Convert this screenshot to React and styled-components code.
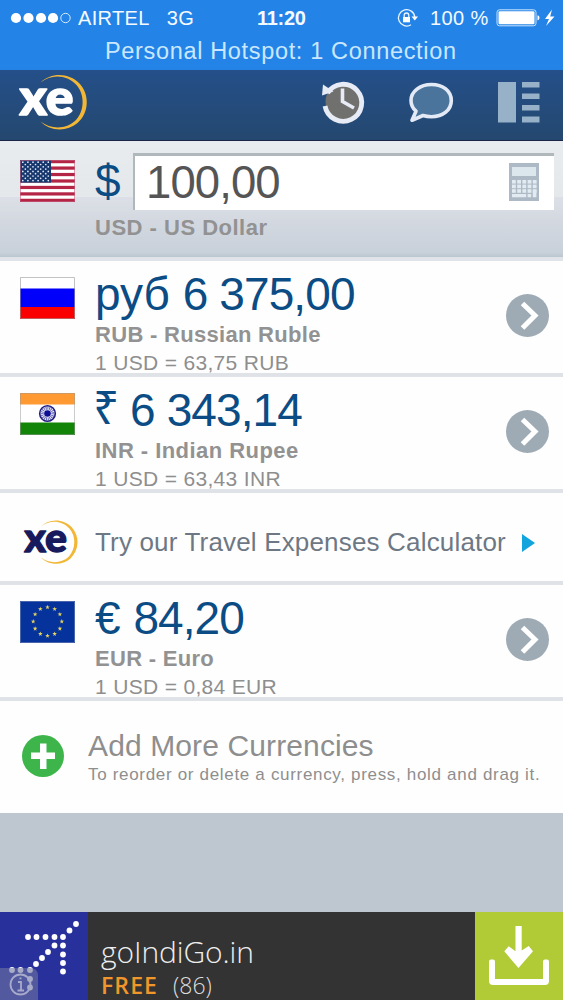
import styled, { createGlobalStyle } from "styled-components"

const GlobalStyle = createGlobalStyle`
    * {
        box-sizing: border-box;
    }
    body {
        margin: 0;
        background: #bec7d0;
        font-family: "Liberation Sans", Arial, sans-serif;
    }
    svg {
        display: block;
        flex: none;
        overflow: visible;
    }
`
const Screen = styled.div`
    width: 563px;
    height: 1000px;
    display: flex;
    flex-direction: column;
    overflow: hidden;
    background: #bec7d0;
    white-space: nowrap;
`

// status bar
const Status = styled.header`
    height: 70px;
    flex: none;
    background: #2483e7;
    color: #f4faff;
`
const StatusLine = styled.div`
    height: 36px;
    display: grid;
    grid-template-columns: 257px 140px 1fr;
    align-items: center;
    font-size: 20px;
    line-height: 24px;
`
const StatusGroup = styled.div`
    display: flex;
    align-items: center;
`
const Carrier = styled.span`
    margin-left: 7px;
    letter-spacing: 0.35px;
`
const Network = styled.span`
    margin-left: 17px;
    letter-spacing: 0.3px;
`
const Time = styled.span`
    font-size: 20px;
    font-weight: bold;
    letter-spacing: -0.3px;
`
const Percent = styled.span`
    margin: 0 7px 0 11px;
    letter-spacing: 0.4px;
`
const Hotspot = styled.div`
    padding: 1px 0 0 105px;
    font-size: 23.5px;
    line-height: 29px;
    letter-spacing: 0.66px;
    color: #c9e8ff;
`

// top bar
const Nav = styled.nav`
    height: 71px;
    flex: none;
    display: flex;
    align-items: flex-start;
    justify-content: space-between;
    padding: 3px 23px 0 17px;
    border-bottom: 1px solid #1b2547;
    background: linear-gradient(#244f89, #24486f);
`
const NavIcons = styled.div`
    display: flex;
    padding-top: 7px;
    gap: 43.5px;
`

// currencies
const Base = styled.section`
    height: 120px;
    flex: none;
    display: grid;
    grid-template-columns: 75px 38px 1fr;
    grid-template-rows: 57px 1fr;
    padding: 12px 9px 0 20px;
    border-bottom: 4px solid #e0e3e7;
    background: linear-gradient(#e9ecef 0, #e5e8eb 56px, #dcdfe6 56px, #c8d0d9 112px, #bac6d0 116px);
`
const FlagSlot = styled.div`
    padding-top: ${(p) => p.$top || 0}px;
`
const Symbol = styled.span`
    font-size: 46px;
    line-height: 57px;
    color: #0b4c85;
`
const AmountField = styled.div`
    display: flex;
    align-items: center;
    justify-content: space-between;
    padding: 0 15px 0 11px;
    border-top: 3px solid #b0b8bb;
    border-left: 2px solid #b0b8bb;
    background: #fff;
    font-size: 45.5px;
    line-height: 50px;
    letter-spacing: -0.9px;
    color: #555;
`
const Keypad = styled.div`
    padding-bottom: 2px;
`
const BaseName = styled.div`
    grid-column: 2 / 4;
    padding-top: 5px;
`
const Row = styled.section`
    height: ${(p) => p.$height || 116}px;
    flex: none;
    display: flex;
    align-items: ${(p) => (p.$center ? "center" : "flex-start")};
    padding: ${(p) => p.$pad || "0 14px 0 20px"};
    border-bottom: ${(p) => (p.$last ? 0 : 4)}px solid #dfe2e6;
    background: #fefefe;
`
const Details = styled.div`
    flex: 1;
    padding: 6px 0 0 20px;
`
const Amount = styled.div`
    display: flex;
    height: 55px;
    font-size: 46px;
    line-height: 54px;
    color: #0b4c85;
    white-space: pre;
`
const Digits = styled.span`
    margin-left: ${(p) => p.$gap}px;
    letter-spacing: -0.9px;
`
const Rupee = styled.span`
    width: 24px;
    margin-left: -2px;
    font-family: "Noto Sans", sans-serif;
    font-size: 46px;
    line-height: 47px;
`
const Name = styled.div`
    font-size: 22px;
    font-weight: bold;
    line-height: 25px;
    letter-spacing: ${(p) => p.$spacing || 0}px;
    color: #929292;
`
const Rate = styled.div`
    font-size: 21px;
    line-height: 24px;
    padding-top: 4px;
    letter-spacing: 0.33px;
    color: #8e8e8e;
`
const Arrow = styled.div`
    padding-top: 33px;
`
const Promo = styled.div`
    margin-left: 15px;
    flex: 1;
    padding-top: 1px;
    font-size: 26px;
    letter-spacing: 0.17px;
    color: #6d7884;
`
const AddText = styled.div`
    margin: 2px 0 0 23px;
`
const AddTitle = styled.div`
    font-size: 30px;
    line-height: 34px;
    letter-spacing: 0.12px;
    color: #8e8e8e;
`
const AddHint = styled.div`
    font-size: 17px;
    line-height: 22px;
    padding-top: 1px;
    letter-spacing: 0.68px;
    color: #8e8e8e;
`

// ad banner
const Banner = styled.footer`
    height: 88px;
    flex: none;
    margin-top: auto;
    display: flex;
    background: #333;
`
const BannerText = styled.div`
    flex: 1;
    padding: 20px 0 0 13px;
    font-family: "Open Sans", sans-serif;
    font-weight: 300;
    color: #eee;
`
const BannerTitle = styled.div`
    font-size: 30px;
    line-height: 40px;
    letter-spacing: -0.1px;
`
const BannerLine = styled.div`
    display: flex;
    gap: 15px;
    font-size: 23px;
    line-height: 26px;
    color: #ddd;
`
const Free = styled.span`
    font-weight: 600;
    letter-spacing: 1.1px;
    color: #f0962a;
`

const Signal = () => (
    <svg width="71" height="20" viewBox="0 0 71 20">
        {[16, 28.5, 41, 53].map((x) => (
            <circle key={x} cx={x} cy="10" r="5.1" fill="#fff" />
        ))}
        <circle cx="65.5" cy="10" r="4.7" fill="none" stroke="#d5ebff" strokeWidth="1" />
    </svg>
)

const RotationLock = () => (
    <svg width="22" height="20" viewBox="0 0 22 20" fill="none" stroke="#eaf5ff">
        <path d="M14 16.8A8.2 8.2 0 1 1 17.8 9" strokeWidth="1.3" />
        <path d="M14.5 8.6h6.5l-3.2 4z" fill="#fff" stroke="none" />
        <rect x="6" y="9" width="7" height="5.3" fill="#fff" stroke="none" />
        <path d="M7.2 9V7.3a2.3 2.3 0 0 1 4.6 0V9" strokeWidth="1.3" />
    </svg>
)

const Battery = () => (
    <svg width="60" height="20" viewBox="0 0 60 20">
        <rect x="1" y="1.8" width="39" height="16" rx="2.5" fill="none" stroke="#c5e3ff" />
        <rect x="2.5" y="3.3" width="36" height="13" rx="1.2" fill="#fff" />
        <path d="M41.5 7.2q2 .4 2 2.6t-2 2.6z" fill="#fff" />
        <path d="M56 1.5 49 11h4l-3 7 8.5-9.5h-4.3z" fill="#fff" />
    </svg>
)

const XeLogo = ({ width, height, color }) => (
    <svg width={width} height={height} viewBox="0 0 70 58">
        <path
            d="M23.5 9.5C34 -1 52 -.6 62.5 10.5C73 22 72 40 60.5 50C50 59 33 58.5 23.5 48.5C34 56.5 49 56.5 58.5 47.5C67.5 38.5 68.2 22 59.5 12C49.5 1 34 1 23.5 9.5Z"
            fill="#f2b736"
        />
        <text
            x="2.5"
            y="42"
            fontFamily="Lato, sans-serif"
            fontSize="50"
            fontWeight="900"
            fill={color}
            stroke={color}
            strokeWidth="1.6"
            strokeLinejoin="round"
            textLength="54"
            lengthAdjust="spacingAndGlyphs"
        >
            xe
        </text>
    </svg>
)

const HistoryIcon = () => (
    <svg width="44" height="44" viewBox="0 0 44 44" fill="none" stroke="#e7ebf5">
        <circle cx="22.5" cy="21.5" r="18" fill="#70706e" stroke="none" />
        <path d="M6.5 13A18.5 18.5 0 1 1 4 26" strokeWidth="4.8" />
        <path d="M2 4.5 1 15.5 12.5 11.5z" fill="#e7ebf5" stroke="none" />
        <path d="M21.5 8.5v13l11.5 6.5" strokeWidth="3.6" />
    </svg>
)

const ChatIcon = () => (
    <svg width="46" height="44" viewBox="0 0 46 44">
        <path
            d="M22.5 4.5C11 4.5 2 11.5 2 20.5c0 4.5 2 8 5 10.7L3 40.3 14 35.5c2.5.8 5.500 1.200 8.500 1.200C34 36.700 42.300 30 42.300 20.500S34 4.500 22.500 4.500Z"
            fill="#4a749c"
            stroke="#e3eaf6"
            strokeWidth="3.6"
            strokeLinejoin="round"
        />
    </svg>
)

const ListIcon = () => (
    <svg width="42" height="44" viewBox="0 0 42 44" fill="#96b1c8">
        <path d="M0 2h18v40.5H0zM24 2h17.5v5.5H24zM24 13.5h17.5v5.5H24zM24 25h17.5v5.5H24zM24 36.5h17.5v6H24z" />
    </svg>
)

const CalculatorIcon = () => (
    <svg width="30" height="38" viewBox="0 0 30 38">
        <path d="M0 0h30v38H0z" fill="#adbac6" />
        <path d="M3 4h24v9H3z" fill="#dce6ed" />
        {[0, 1, 2].map((r) =>
            [3, 8.2, 13.4, 18.6, 23.8].map((x) => (
                <rect key={`${r}-${x}`} x={x} y={17 + r * 4.6} width="3.8" height="3.6" fill="#e2ebf1" />
            ))
        )}
        <path d="M3 31h14.2v3.2H3zM18.6 31h3.6v3.2h-3.6zM23.8 27h3.6v7.2h-3.6z" fill="#e2ebf1" />
    </svg>
)

const UsFlag = () => (
    <svg width="55" height="42" viewBox="0 0 55 42">
        <path d="M0 0h55v42H0z" fill="#fff" />
        {[0, 1, 2, 3, 4, 5, 6].map((i) => (
            <rect key={i} y={i * 6.46} width="55" height="3.23" fill="#b32445" />
        ))}
        <path d="M0 0h31v22.6H0z" fill="#17376f" />
        {[0, 1, 2, 3, 4, 5, 6, 7, 8].map((r) =>
            [0, 1, 2, 3, 4, 5].slice(r % 2).map((c) => (
                <circle key={`${r}-${c}`} cx={2.8 + c * 5.1 - (r % 2) * 2.55} cy={2.2 + r * 2.3} r=".85" fill="#e6ecf7" />
            ))
        )}
        <path d="M.5.5h54v41H.5z" fill="none" stroke="#c56380" strokeOpacity=".6" />
    </svg>
)

const RuFlag = () => (
    <svg width="55" height="42" viewBox="0 0 55 42">
        <path d="M0 0h55v42H0z" fill="#fff" />
        <path d="M0 11.5h55v19H0z" fill="#0000fb" />
        <path d="M0 30h55v12H0z" fill="#fb0000" />
        <path d="M.5.5h54v41H.5z" fill="none" stroke="#999" strokeOpacity=".6" />
    </svg>
)

const InFlag = () => (
    <svg width="55" height="42" viewBox="0 0 55 42">
        <path d="M0 0h55v42H0z" fill="#fff" />
        <path d="M0 0h55v11.5H0z" fill="#ff9a33" />
        <path d="M0 29.5h55V42H0z" fill="#128509" />
        <circle cx="27.5" cy="20.5" r="7.8" fill="#f1f1fc" stroke="#1c1c80" strokeWidth="1.6" />
        <circle cx="27.5" cy="20.5" r="5.5" fill="none" stroke="#5c5cae" strokeWidth="3.5" strokeDasharray=".9 .9" />
        <circle cx="27.5" cy="20.5" r="3.3" fill="#0d0d95" />
        <path d="M.5.5h54v41H.5z" fill="none" stroke="#999" strokeOpacity=".5" />
    </svg>
)

const EuFlag = () => (
    <svg width="55" height="42" viewBox="0 0 55 42">
        <path d="M0 0h55v42H0z" fill="#06339b" />
        {[...Array(12)].map((_, i) => {
            const a = (i * Math.PI) / 6
            return (
                <path
                    key={i}
                    transform={`translate(${27.5 + 14.3 * Math.sin(a)} ${20.5 - 14.3 * Math.cos(a)})`}
                    d="M0-2.4.6-.8h1.7L.9.3l.5 1.7L0 1l-1.4 1 .5-1.7-1.4-1.1h1.7z"
                    fill="#e6d45e"
                />
            )
        })}
        <path d="M.5.5h54v41H.5z" fill="none" stroke="#7587b8" strokeOpacity=".6" />
    </svg>
)

const ArrowIcon = () => (
    <svg width="43" height="43" viewBox="0 0 43 43">
        <circle cx="21.5" cy="21.5" r="21.5" fill="#9eabb5" />
        <path d="m16.5 9.5 12.5 12-12.5 12.5" fill="none" stroke="#fff" strokeWidth="5" />
    </svg>
)

const PlusIcon = () => (
    <svg width="45" height="42" viewBox="0 0 45 42">
        <circle cx="23" cy="21" r="21" fill="#3db54a" />
        <path d="M20 8.5h6.5v9H35V24h-8.5v10H20V24h-9v-6.5h9z" fill="#fff" />
    </svg>
)

const PlayIcon = () => (
    <svg width="28" height="18" viewBox="0 0 28 18">
        <path d="M1 1v18l13-9z" fill="#12a5dd" />
    </svg>
)

const dots = [
    [76, 12], [69.5, 18.5], [63, 25], [54.5, 33.5], [48, 40], [42, 46], [36, 52], [30, 58],
    [28, 25], [36.5, 25], [45.5, 25], [54.5, 25],
    [63, 33.5], [63, 42.5], [63, 51], [63, 59.5],
    [12, 58], [20.5, 58], [30, 67], [30, 75.5],
]

const IndigoLogo = () => (
    <svg width="88" height="88" viewBox="0 0 88 88">
        <path d="M0 0h88v88H0z" fill="#28319b" />
        {dots.map(([x, y]) => (
            <circle key={`${x}-${y}`} cx={x} cy={y} r="2.9" fill="#fff" />
        ))}
        <path d="M0 56h30q8 0 8 8v24H0z" fill="#6f74a0" fillOpacity=".6" />
        <g fill="none" stroke="#a7aacb" strokeWidth="1.8">
            <circle cx="20.5" cy="72.5" r="10" />
            <path d="M18 70h3v8M17.5 78.5h6.5M19.5 66.3h2" />
        </g>
    </svg>
)

const DownloadIcon = () => (
    <svg width="88" height="88" viewBox="0 0 88 88">
        <path d="M0 0h88v88H0z" fill="#b1cb36" />
        <path d="M14 50.5v-1q0-2 2-2h2q2 0 2 2V67h48V49.5q0-2 2-2h2q2 0 2 2V69q0 4-4 4H18q-4 0-4-4z" fill="#fff" />
        <path d="M40.5 14h6.2v24.5l7-4.5 4.3 5.300L43.500 56 29.300 39.300l4.400-5 6.800 5z" fill="#fff" />
    </svg>
)

const rates = {
    rub: { flag: <RuFlag />, name: "RUB - Russian Ruble", rate: "1 USD = 63,75 RUB", spacing: 0.3 },
    inr: { flag: <InFlag />, name: "INR - Indian Rupee", rate: "1 USD = 63,43 INR", spacing: 0.45 },
    eur: { flag: <EuFlag />, name: "EUR - Euro", rate: "1 USD = 0,84 EUR", spacing: 0.3 },
}

const Currency = ({ code, children }) => {
    const { flag, name, rate, spacing } = rates[code]
    return (
        <Row>
            <FlagSlot $top={16}>{flag}</FlagSlot>
            <Details>
                <Amount>{children}</Amount>
                <Name $spacing={spacing}>{name}</Name>
                <Rate>{rate}</Rate>
            </Details>
            <Arrow><ArrowIcon /></Arrow>
        </Row>
    )
}

const App = () => {
    return (
        <Screen>
            <GlobalStyle />
            <Status>
                <StatusLine>
                    <StatusGroup>
                        <Signal />
                        <Carrier>AIRTEL</Carrier>
                        <Network>3G</Network>
                    </StatusGroup>
                    <Time>11:20</Time>
                    <StatusGroup>
                        <RotationLock />
                        <Percent>100 %</Percent>
                        <Battery />
                    </StatusGroup>
                </StatusLine>
                <Hotspot>Personal Hotspot: 1 Connection</Hotspot>
            </Status>
            <Nav>
                <XeLogo width={70} height={58} color="#fff" />
                <NavIcons>
                    <HistoryIcon />
                    <ChatIcon />
                    <ListIcon />
                </NavIcons>
            </Nav>
            <Base>
                <FlagSlot $top={7}><UsFlag /></FlagSlot>
                <Symbol>$</Symbol>
                <AmountField>
                    100,00
                    <Keypad><CalculatorIcon /></Keypad>
                </AmountField>
                <BaseName>
                    <Name $spacing={0.5}>USD - US Dollar</Name>
                </BaseName>
            </Base>
            <Currency code="rub">
                руб 6<Digits $gap={11}>375,00</Digits>
            </Currency>
            <Currency code="inr">
                <Rupee>₹</Rupee>
                <Digits $gap={13}>6</Digits>
                <Digits $gap={12}>343,14</Digits>
            </Currency>
            <Row $height={92} $center $pad="9px 14px 0 20px">
                <XeLogo width={60} height={46} color="#171a5c" />
                <Promo>Try our Travel Expenses Calculator</Promo>
                <PlayIcon />
            </Row>
            <Currency code="eur">
                € <Digits $gap={0}>84,20</Digits>
            </Currency>
            <Row $height={112} $center $last $pad="0 14px 2px 20px">
                <PlusIcon />
                <AddText>
                    <AddTitle>Add More Currencies</AddTitle>
                    <AddHint>To reorder or delete a currency, press, hold and drag it.</AddHint>
                </AddText>
            </Row>
            <Banner>
                <IndigoLogo />
                <BannerText>
                    <BannerTitle>goIndiGo.in</BannerTitle>
                    <BannerLine>
                        <Free>FREE</Free>
                        <span>(86)</span>
                    </BannerLine>
                </BannerText>
                <DownloadIcon />
            </Banner>
        </Screen>
    )
}

export default App
